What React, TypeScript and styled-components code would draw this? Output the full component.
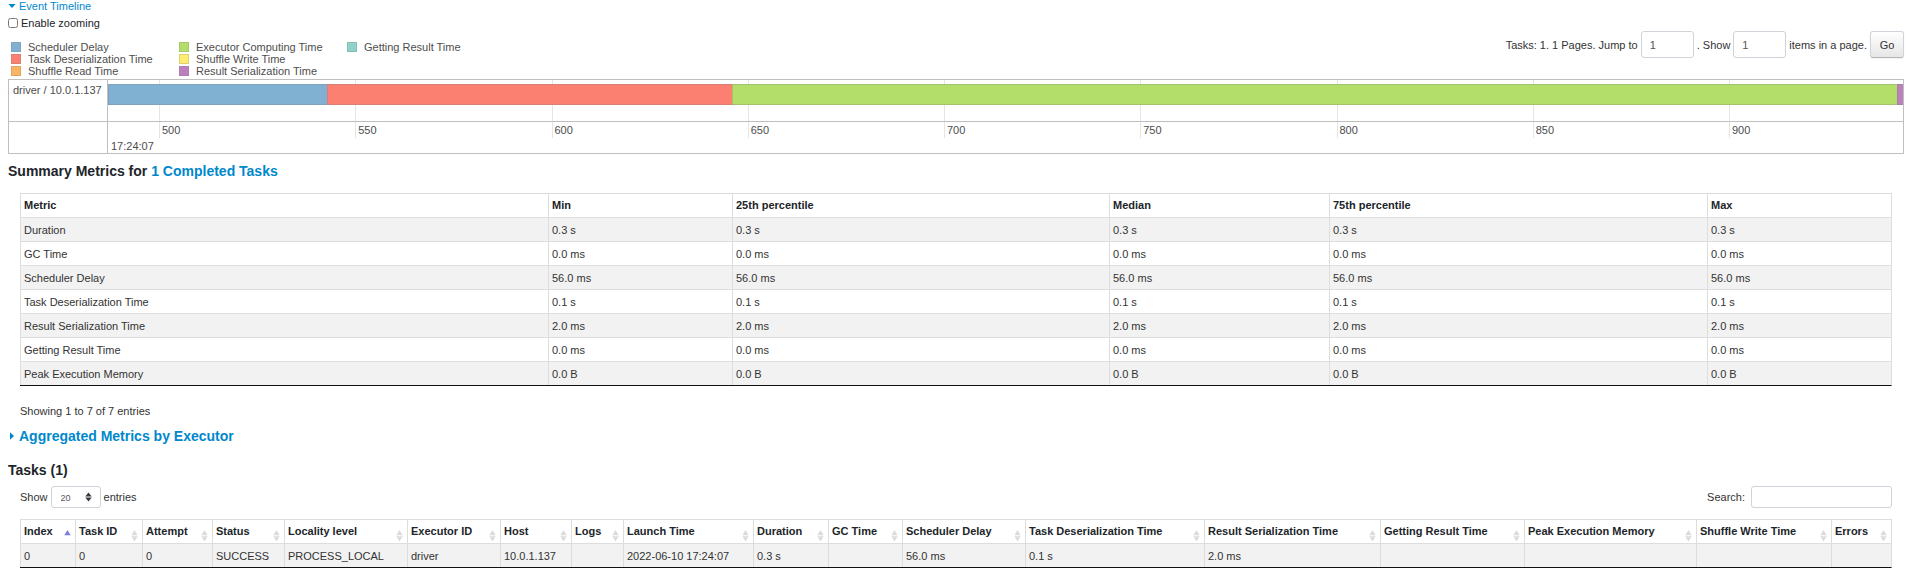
import React, { useState } from "react";
import styled, { createGlobalStyle } from "styled-components";

const GlobalStyle = createGlobalStyle`
  *, *::before, *::after { box-sizing: border-box; }
  body {
    margin: 0;
    background: #fff;
    color: #333;
    font: 11px/12px "Liberation Sans", Arial, sans-serif;
  }
  button, input, select { font: inherit; color: inherit; margin: 0; }
`;

const Page = styled.main`
  padding: 0 7px 8px 8px;
`;

const TextLink = styled.a`
  color: #0088cc;
  text-decoration: none;
`;

const ToggleLink = styled(TextLink)`
  display: flex;
  align-items: center;
  gap: 2px;
`;

const Caret = styled.svg`
  width: 9px;
  height: 8px;
  fill: currentColor;
`;

const ZoomLabel = styled.label`
  display: flex;
  align-items: center;
  gap: 3px;
  margin-top: 5px;
  color: #212529;
`;

const ZoomBox = styled.input`
  width: 10px;
  height: 10px;
`;

const TimelineHead = styled.div`
  display: flex;
  justify-content: space-between;
  align-items: flex-start;
  margin: 2px 0;
`;

const Legend = styled.ul`
  display: grid;
  grid-auto-flow: column;
  grid-template-rows: repeat(3, 12px);
  grid-auto-columns: 168px;
  list-style: none;
  margin: 10px 0 0;
  padding: 0 3px;
  color: #4d4d4d;
`;

const LegendItem = styled.li`
  display: flex;
  align-items: center;
  gap: 7px;
`;

const Swatch = styled.span<{ $color: string }>`
  width: 10px;
  height: 10px;
  background: ${(p) => p.$color};
  border: 1px solid rgba(128, 128, 128, 0.25);
`;

const Pager = styled.form`
  display: flex;
  align-items: center;
  gap: 3px;
`;

const PagerLabel = styled.label`
  display: flex;
  align-items: center;
  gap: 3px;
`;

const Field = styled.input`
  border: 1px solid #ced4da;
  border-radius: 3px;
  background: #fff;
  outline: none;
`;

const PagerField = styled(Field)`
  width: 53px;
  height: 27px;
  padding: 0 8px;
  color: #555;
`;

const GoButton = styled.button`
  width: 34px;
  height: 27px;
  padding: 0;
  border: 1px solid #ced4da;
  border-bottom-color: #b3b3b3;
  border-radius: 3px;
  background: linear-gradient(#fff, #e6e6e6);
  box-shadow: 0 1px 2px rgba(0, 0, 0, 0.05);
`;

const Timeline = styled.div`
  display: grid;
  grid-template: 42px 31px / 99px 1fr;
  border: 1px solid #bfbfbf;
  color: #4d4d4d;
`;

const GroupLabel = styled.div`
  padding: 4px;
  border-right: 1px solid #bfbfbf;
  border-bottom: 1px solid #bfbfbf;
`;

const AxisCorner = styled.div`
  grid-area: 2 / 1;
  border-right: 1px solid #bfbfbf;
`;

const Ticks = styled.div`
  grid-area: 1 / 2 / 3 / 3;
  display: grid;
  grid-template-columns: 204fr repeat(8, 785fr) 696fr;
  height: 58px;
`;

const Tick = styled.div`
  min-width: 0;
  padding: 44px 0 0 2px;
  border-left: 1px solid #e5e5e5;
`;

const Lane = styled.div`
  grid-area: 1 / 2;
  display: flex;
  align-items: flex-start;
  padding-top: 4px;
  border-bottom: 1px solid #bfbfbf;
`;

const Phase = styled.div<{ $span: number; $color: string }>`
  flex: ${(p) => p.$span} 0 0;
  height: 21px;
  background: ${(p) => p.$color};
  box-shadow:
    inset 1px 1px rgba(128, 128, 128, 0.3),
    inset 0 -1px rgba(128, 128, 128, 0.3);
`;

const AxisMajor = styled.div`
  grid-area: 2 / 2;
  align-self: end;
  padding: 0 3px 1px;
`;

const Heading = styled.h4<{ $gap: number }>`
  margin: ${(p) => p.$gap}px 0 0;
  font-size: 14px;
  line-height: 16px;
  color: #212529;
`;

const Section = styled.section<{ $gap: number }>`
  margin: ${(p) => p.$gap}px 12px 0;
`;

const DataTable = styled.table`
  width: 100%;
  table-layout: fixed;
  border-collapse: separate;
  border-spacing: 0;
  border-top: 1px solid #ddd;
  border-right: 1px solid #ddd;
  border-bottom: 1px solid #111;
`;

const Col = styled.col<{ $share: number }>`
  width: ${(p) => p.$share}%;
`;

const HeadCell = styled.th`
  padding: 5px 3px 6px;
  border-left: 1px solid #ddd;
  text-align: left;
  white-space: nowrap;
  color: #212529;
`;

const SortCell = styled(HeadCell)`
  padding: 0;
`;

const SortButton = styled.button`
  display: flex;
  justify-content: space-between;
  width: 100%;
  height: 23px;
  padding: 5px 4px 0 3px;
  border: 0;
  background: none;
  font-weight: bold;
  text-align: left;
  cursor: pointer;
`;

const SortIcon = styled.svg`
  flex: none;
  width: 7px;
  height: 12px;
  margin-top: 5px;
`;

const Row = styled.tr`
  &:nth-child(odd) { background: #f2f2f2; }
`;

const Cell = styled.td`
  padding: 6px 3px 5px;
  border-top: 1px solid #ddd;
  border-left: 1px solid #ddd;
  height: 24px;
  white-space: nowrap;
`;

const TableInfo = styled.p`
  margin: 19px 0 0;
`;

const TableTools = styled.div`
  display: flex;
  justify-content: space-between;
  margin-bottom: 11px;
`;

const ToolLabel = styled.label<{ $gap: number }>`
  display: flex;
  align-items: center;
  gap: ${(p) => p.$gap}px;
`;

const SelectWrap = styled.span`
  position: relative;
  display: flex;
`;

const LengthSelect = styled.select`
  appearance: none;
  width: 50px;
  height: 22px;
  padding: 2px 9px 0;
  border: 1px solid #ced4da;
  border-radius: 3px;
  background: #fff;
  color: #555;
  font-size: 9px;
`;

const SelectArrows = styled.svg`
  position: absolute;
  right: 9px;
  top: 6px;
  width: 7px;
  height: 10px;
  fill: #343a40;
  pointer-events: none;
`;

const SearchField = styled(Field)`
  width: 141px;
  height: 22px;
  padding: 0 8px;
`;

const legend = [
  ["Scheduler Delay", "#80b1d3"],
  ["Task Deserialization Time", "#fb8072"],
  ["Shuffle Read Time", "#fdb462"],
  ["Executor Computing Time", "#b3de69"],
  ["Shuffle Write Time", "#ffed6f"],
  ["Result Serialization Time", "#bc80bd"],
  ["Getting Result Time", "#8dd3c7"],
];

const phases: [number, string][] = [
  [219, "#80b1d3"],
  [405, "#fb8072"],
  [1165, "#b3de69"],
  [6, "#bc80bd"],
];

const ticks = [500, 550, 600, 650, 700, 750, 800, 850, 900];

const summaryColumns: [string, number][] = [
  ["Metric", 528],
  ["Min", 184],
  ["25th percentile", 377],
  ["Median", 220],
  ["75th percentile", 378],
  ["Max", 184],
];

const metrics = [
  ["Duration", "0.3 s"],
  ["GC Time", "0.0 ms"],
  ["Scheduler Delay", "56.0 ms"],
  ["Task Deserialization Time", "0.1 s"],
  ["Result Serialization Time", "2.0 ms"],
  ["Getting Result Time", "0.0 ms"],
  ["Peak Execution Memory", "0.0 B"],
];

const taskColumns: [string, number, string][] = [
  ["Index", 55, "0"],
  ["Task ID", 67, "0"],
  ["Attempt", 70, "0"],
  ["Status", 72, "SUCCESS"],
  ["Locality level", 123, "PROCESS_LOCAL"],
  ["Executor ID", 93, "driver"],
  ["Host", 71, "10.0.1.137"],
  ["Logs", 52, ""],
  ["Launch Time", 130, "2022-06-10 17:24:07"],
  ["Duration", 75, "0.3 s"],
  ["GC Time", 74, ""],
  ["Scheduler Delay", 123, "56.0 ms"],
  ["Task Deserialization Time", 179, "0.1 s"],
  ["Result Serialization Time", 176, "2.0 ms"],
  ["Getting Result Time", 144, ""],
  ["Peak Execution Memory", 172, ""],
  ["Shuffle Write Time", 135, ""],
  ["Errors", 60, ""],
];

function Columns({ widths }: { widths: number[] }) {
  const total = widths.reduce((a, b) => a + b, 0);
  return (
    <colgroup>
      {widths.map((w, i) => (
        <Col key={i} $share={(w / total) * 100} />
      ))}
    </colgroup>
  );
}

export default function App() {
  const [zooming, setZooming] = useState(false);
  return (
    <>
      <GlobalStyle />
      <Page>
        <ToggleLink href="#timeline">
          <Caret viewBox="0 0 9 8" aria-hidden="true">
            <path d="M0.3 2h7.4L4 6z" />
          </Caret>
          Event Timeline
        </ToggleLink>
        <ZoomLabel>
          <ZoomBox
            type="checkbox"
            checked={zooming}
            onChange={(e) => setZooming(e.target.checked)}
          />
          Enable zooming
        </ZoomLabel>

        <TimelineHead>
          <Legend>
            {legend.map(([name, color]) => (
              <LegendItem key={name}>
                <Swatch $color={color} />
                {name}
              </LegendItem>
            ))}
          </Legend>
          <Pager onSubmit={(e) => e.preventDefault()}>
            <PagerLabel>
              Tasks: 1. 1 Pages. Jump to
              <PagerField type="text" defaultValue="1" />
            </PagerLabel>
            <PagerLabel>
              . Show
              <PagerField type="text" defaultValue="1" aria-label="Items in a page" />
            </PagerLabel>
            <span>items in a page.</span>
            <GoButton type="submit">Go</GoButton>
          </Pager>
        </TimelineHead>

        <Timeline id="timeline">
          <GroupLabel>driver / 10.0.1.137</GroupLabel>
          <AxisCorner />
          <Ticks>
            <span />
            {ticks.map((t) => (
              <Tick key={t}>{t}</Tick>
            ))}
          </Ticks>
          <Lane>
            {phases.map(([span, color]) => (
              <Phase key={color} $span={span} $color={color} />
            ))}
          </Lane>
          <AxisMajor>17:24:07</AxisMajor>
        </Timeline>

        <Heading $gap={9}>
          Summary Metrics for <TextLink href="#tasks">1 Completed Tasks</TextLink>
        </Heading>

        <Section $gap={14}>
          <DataTable>
            <Columns widths={summaryColumns.map((c) => c[1])} />
            <thead>
              <tr>
                {summaryColumns.map(([name]) => (
                  <HeadCell key={name} scope="col">{name}</HeadCell>
                ))}
              </tr>
            </thead>
            <tbody>
              {metrics.map(([name, value]) => (
                <Row key={name}>
                  <Cell>{name}</Cell>
                  {summaryColumns.slice(1).map(([col]) => (
                    <Cell key={col}>{value}</Cell>
                  ))}
                </Row>
              ))}
            </tbody>
          </DataTable>
          <TableInfo>Showing 1 to 7 of 7 entries</TableInfo>
        </Section>

        <Heading $gap={11}>
          <ToggleLink href="#aggregated">
            <Caret viewBox="0 0 9 8" aria-hidden="true">
              <path d="M2 0.3v7.4L6 4z" />
            </Caret>
            Aggregated Metrics by Executor
          </ToggleLink>
        </Heading>

        <Heading id="tasks" $gap={18}>Tasks (1)</Heading>

        <Section $gap={8}>
          <TableTools>
            <ToolLabel $gap={3}>
              Show
              <SelectWrap>
                <LengthSelect defaultValue="20">
                  <option>20</option>
                  <option>40</option>
                  <option>60</option>
                  <option>100</option>
                </LengthSelect>
                <SelectArrows viewBox="0 0 7 10" aria-hidden="true">
                  <path d="M3.5 0.5L6.7 4.4H0.3zM3.5 9.5L0.3 5.6H6.7z" />
                </SelectArrows>
              </SelectWrap>
              entries
            </ToolLabel>
            <ToolLabel $gap={6}>
              Search:
              <SearchField type="search" />
            </ToolLabel>
          </TableTools>
          <DataTable>
            <Columns widths={taskColumns.map((c) => c[1])} />
            <thead>
              <tr>
                {taskColumns.map(([name], i) => (
                  <SortCell key={name} scope="col" aria-sort={i === 0 ? "ascending" : "none"}>
                    <SortButton type="button">
                      {name}
                      <SortIcon viewBox="0 0 7 12" aria-hidden="true">
                        {i === 0 ? (
                          <path d="M3.5 0L6.7 5.2H0.3z" fill="#7c7fe0" />
                        ) : (
                          <path d="M3.5 0L6.7 5.2H0.3zM0.3 6.2H6.7L3.5 11.4z" fill="#dcdcdc" />
                        )}
                      </SortIcon>
                    </SortButton>
                  </SortCell>
                ))}
              </tr>
            </thead>
            <tbody>
              <Row>
                {taskColumns.map(([name, , value]) => (
                  <Cell key={name}>{value}</Cell>
                ))}
              </Row>
            </tbody>
          </DataTable>
        </Section>
      </Page>
    </>
  );
}
